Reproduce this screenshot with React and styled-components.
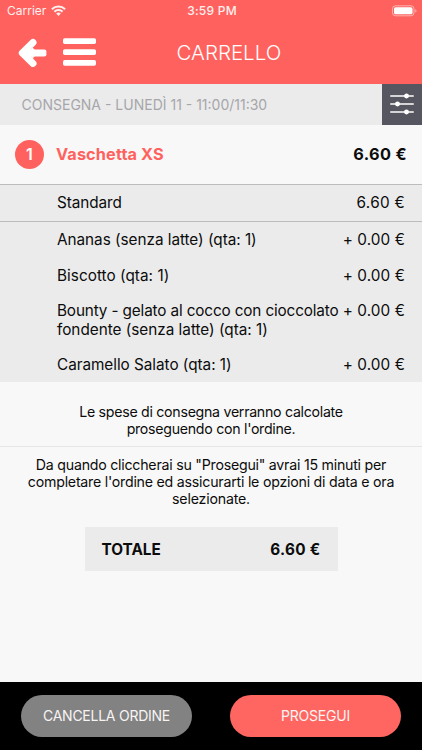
import React from 'react';
import styled, { createGlobalStyle } from 'styled-components';

const Global = createGlobalStyle`
  * { box-sizing: border-box; }
  body { margin: 0; background: #f8f8f8; }
`;

const Screen = styled.div`
  display: flex;
  flex-direction: column;
  width: 422px;
  height: 750px;
  overflow: hidden;
  background: #f8f8f8;
  color: #0c0c0c;
  font-family: Inter, "Liberation Sans", sans-serif;
  white-space: nowrap;
`;

const Header = styled.header`
  height: 84px;
  flex: none;
  background: #ff625e;
  color: #fff;
`;

const StatusBar = styled.div`
  display: grid;
  grid-template-columns: 1fr auto 1fr;
  align-items: center;
  height: 22px;
  padding: 0 5px 0 7px;
`;

const Carrier = styled.div`
  display: flex;
  align-items: center;
  gap: 5px;
  font-size: 12px;
  line-height: 22px;
  opacity: 0.9;
`;

const WifiIcon = styled.svg`
  margin-bottom: 2px;
`;

const Clock = styled.div`
  font-size: 12px;
  line-height: 22px;
  font-weight: 500;
  letter-spacing: 0.25px;
  opacity: 0.9;
`;

const BatteryIcon = styled.svg`
  justify-self: end;
  margin-bottom: 1px;
`;

const NavBar = styled.div`
  display: grid;
  grid-template-columns: 176.5px 1fr;
  align-items: center;
  height: 62px;
`;

const NavIcons = styled.div`
  display: flex;
  align-items: center;
  gap: 16px;
  padding: 0 0 2px 18px;
`;

const ArrowIcon = styled.svg`
  margin-top: 2px;
`;

const Title = styled.h1`
  margin: 0;
  font-size: 20.5px;
  line-height: 62px;
  font-weight: 300;
`;

const DeliveryBar = styled.div`
  display: flex;
  justify-content: space-between;
  flex: none;
  height: 41px;
  background: #ebebeb;
`;

const DeliveryText = styled.div`
  padding-left: 21.5px;
  font-size: 14px;
  line-height: 42px;
  color: #a6a6aa;
`;

const FilterButton = styled.button`
  display: grid;
  place-items: center;
  width: 40px;
  height: 41px;
  padding: 0 0 2px;
  border: 0;
  background: #565661;
`;

const Product = styled.div`
  display: flex;
  align-items: center;
  flex: none;
  height: 59px;
  padding: 0 15px 1px 15px;
  font-size: 16.3px;
  font-weight: 700;
`;

const Quantity = styled.div`
  width: 29px;
  height: 29px;
  margin-right: 12px;
  border-radius: 50%;
  background: #ff625e;
  color: #fff;
  font-size: 16px;
  font-weight: 600;
  line-height: 29px;
  text-align: center;
`;

const ProductName = styled.div`
  flex: 1;
  color: #ff625e;
`;

const Details = styled.div`
  flex: none;
  height: 198px;
  border-top: 1px solid #bcbcbe;
  background: #ebebeb;
`;

const Row = styled.div`
  display: flex;
  justify-content: space-between;
  height: ${(p) => p.$height}px;
  padding: ${(p) => p.$top}px 17px 0 57px;
  border-bottom: ${(p) => (p.$divider ? '1px solid #bcbcbe' : '0')};
  font-size: 15.3px;
  line-height: 19px;
`;

const Notice = styled.p`
  flex: none;
  height: ${(p) => p.$height}px;
  margin: 0;
  padding-top: ${(p) => p.$top}px;
  border-bottom: ${(p) => (p.$divider ? '1px solid #e6e6e6' : '0')};
  font-size: 14.2px;
  line-height: 17px;
  text-align: center;
`;

const Total = styled.div`
  display: flex;
  justify-content: space-between;
  align-items: center;
  flex: none;
  width: 253px;
  height: 44px;
  margin: 0 auto;
  padding: 0 17px;
  background: #ebebeb;
  font-size: 15.3px;
  font-weight: 700;
`;

const Footer = styled.footer`
  display: flex;
  justify-content: space-between;
  flex: none;
  height: 68px;
  margin-top: auto;
  padding: 13px 21px 0;
  background: #000;
`;

const Action = styled.button`
  width: 171px;
  height: 42px;
  padding: 0;
  border: 0;
  border-radius: 21px;
  background: ${(p) => (p.$primary ? '#ff6661' : '#828282')};
  color: #f8f4f4;
  font: 400 14px/42px Inter, sans-serif;
`;

const Text = styled.span`
  letter-spacing: ${(p) => p.$track || 0}px;
`;

const options = [
  { name: 'Ananas (senza latte) (qta: 1)', height: 36, top: 8, track: -0.03 },
  { name: 'Biscotto (qta: 1)', height: 35, top: 8, track: 0.04 },
  {
    name: (
      <>
        Bounty - gelato al cocco con cioccolato<br />
        <Text $track={-0.01}>fondente (senza latte) (qta: 1)</Text>
      </>
    ),
    height: 54,
    top: 8,
    track: -0.14,
  },
  { name: 'Caramello Salato (qta: 1)', height: 35, top: 8, track: -0.03 },
];

export default function App() {
  return (
    <Screen>
      <Global />
      <Header>
        <StatusBar>
          <Carrier>
            <Text>Carrier</Text>
            <WifiIcon width="15" height="11" viewBox="0 0 15 11" fill="none" stroke="#fff" strokeWidth="2">
              <path d="M.9 4.2a9.4 9.4 0 0 1 13.2 0" />
              <path d="M3.4 6.8a5.8 5.8 0 0 1 8.2 0" />
              <path d="M7.5 11 5.2 8.6a3.3 3.3 0 0 1 4.6 0Z" fill="#fff" stroke="none" />
            </WifiIcon>
          </Carrier>
          <Clock>3:59 PM</Clock>
          <BatteryIcon width="25" height="12" viewBox="0 0 25 12">
            <rect x=".5" y=".8" width="21.5" height="10" rx="3" fill="none" stroke="#fff" strokeOpacity=".5" />
            <rect x="2" y="2.3" width="18.5" height="7" rx="1.6" fill="#fff" />
            <path d="M23.4 4.2v3.4c1.4-.6 1.4-2.8 0-3.4Z" fill="#fff" fillOpacity=".6" />
          </BatteryIcon>
        </StatusBar>
        <NavBar>
          <NavIcons>
            <ArrowIcon width="29" height="30" viewBox="0 0 29 30" fill="#fff" stroke="#fff" strokeWidth="7" strokeLinecap="round" strokeLinejoin="round">
              <path d="M15 4.4 4.3 15 15 25.4" fill="none" />
              <path d="M5 15h12" fill="none" strokeLinecap="butt" />
              <rect x="12" y="11.4" width="16.4" height="7.2" rx="2" stroke="none" />
              <path d="M9 15l6-5v10Z" strokeWidth="1" />
            </ArrowIcon>
            <svg width="33" height="28" viewBox="0 0 33 28" fill="#fff">
              <rect y=".2" width="33" height="5.8" rx="1.7" />
              <rect y="11.2" width="33" height="5.8" rx="1.7" />
              <rect y="22" width="33" height="5.8" rx="1.7" />
            </svg>
          </NavIcons>
          <Title><Text>CARRELLO</Text></Title>
        </NavBar>
      </Header>
      <DeliveryBar>
        <DeliveryText><Text>CONSEGNA - LUNEDÌ 11 - 11:00/11:30</Text></DeliveryText>
        <FilterButton aria-label="Opzioni">
          <svg width="24" height="22" viewBox="0 0 24 22" fill="#fff" stroke="#fff" strokeWidth="1.7" strokeLinecap="round">
            <path d="M.8 3h22.4M.8 11h22.4M.8 19h22.4" />
            <circle cx="16.5" cy="3" r="1.6" />
            <circle cx="7.5" cy="11" r="1.6" />
            <circle cx="16.5" cy="19" r="1.6" />
          </svg>
        </FilterButton>
      </DeliveryBar>
      <Product>
        <Quantity>1</Quantity>
        <ProductName><Text $track={0.12}>Vaschetta XS</Text></ProductName>
        <Text $track={0.35}>6.60 €</Text>
      </Product>
      <Details>
        <Row $height={37} $top={8} $divider>
          <Text $track={-0.08}>Standard</Text>
          <Text $track={0.3}>6.60 €</Text>
        </Row>
        {options.map((o, i) => (
          <Row key={i} $height={o.height} $top={o.top}>
            <Text $track={o.track}>{o.name}</Text>
            <Text $track={0.1}>+ 0.00 €</Text>
          </Row>
        ))}
      </Details>
      <Notice $height={65} $top={21} $divider>
        <Text $track={-0.29}>Le spese di consegna verranno calcolate</Text><br />
        <Text $track={-0.29}>proseguendo con l'ordine.</Text>
      </Notice>
      <Notice $height={80} $top={9}>
        <Text $track={-0.24}>Da quando cliccherai su "Prosegui" avrai 15 minuti per</Text><br />
        <Text $track={-0.23}>completare l'ordine ed assicurarti le opzioni di data e ora</Text><br />
        <Text $track={-0.2}>selezionate.</Text>
      </Notice>
      <Total>
        <Text $track={0}>TOTALE</Text>
        <Text $track={0.3}>6.60 €</Text>
      </Total>
      <Footer>
        <Action><Text $track={-0.25}>CANCELLA ORDINE</Text></Action>
        <Action $primary><Text $track={-0.2}>PROSEGUI</Text></Action>
      </Footer>
    </Screen>
  );
}
